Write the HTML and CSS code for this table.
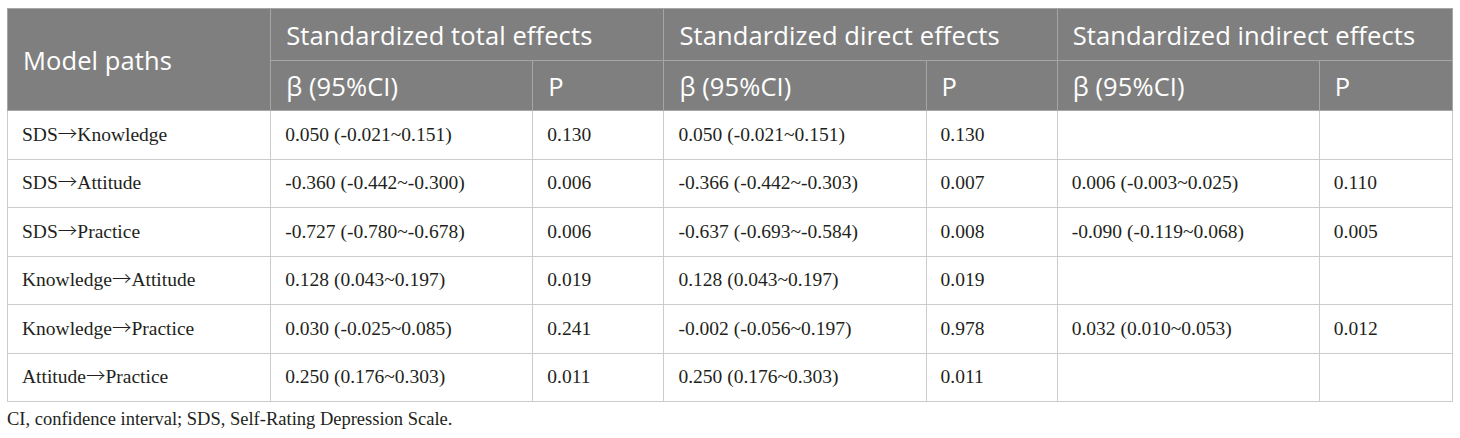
FILE: index.html
```html
<!DOCTYPE html>
<html lang="en">
<head>
<meta charset="utf-8">
<title>Table</title>
<link rel="stylesheet" href="styles.css">
</head>
<body>
<div class="wrap">
<table class="tbl">
<colgroup>
<col class="c-path"><col class="c-b"><col class="c-p"><col class="c-b"><col class="c-p"><col class="c-b"><col class="c-p2">
</colgroup>
<thead>
<tr class="h1">
<th rowspan="2">Model paths</th>
<th colspan="2">Standardized total effects</th>
<th colspan="2">Standardized direct effects</th>
<th colspan="2">Standardized indirect effects</th>
</tr>
<tr class="h2">
<th>β (95%CI)</th><th>P</th>
<th>β (95%CI)</th><th>P</th>
<th>β (95%CI)</th><th>P</th>
</tr>
</thead>
<tbody>
<tr><td>SDS<span class="arr">→</span>Knowledge</td><td>0.050 (-0.021~0.151)</td><td>0.130</td><td>0.050 (-0.021~0.151)</td><td>0.130</td><td></td><td></td></tr>
<tr><td>SDS<span class="arr">→</span>Attitude</td><td>-0.360 (-0.442~-0.300)</td><td>0.006</td><td>-0.366 (-0.442~-0.303)</td><td>0.007</td><td>0.006 (-0.003~0.025)</td><td>0.110</td></tr>
<tr><td>SDS<span class="arr">→</span>Practice</td><td>-0.727 (-0.780~-0.678)</td><td>0.006</td><td>-0.637 (-0.693~-0.584)</td><td>0.008</td><td>-0.090 (-0.119~0.068)</td><td>0.005</td></tr>
<tr><td>Knowledge<span class="arr">→</span>Attitude</td><td>0.128 (0.043~0.197)</td><td>0.019</td><td>0.128 (0.043~0.197)</td><td>0.019</td><td></td><td></td></tr>
<tr><td>Knowledge<span class="arr">→</span>Practice</td><td>0.030 (-0.025~0.085)</td><td>0.241</td><td>-0.002 (-0.056~0.197)</td><td>0.978</td><td>0.032 (0.010~0.053)</td><td>0.012</td></tr>
<tr><td>Attitude<span class="arr">→</span>Practice</td><td>0.250 (0.176~0.303)</td><td>0.011</td><td>0.250 (0.176~0.303)</td><td>0.011</td><td></td><td></td></tr>
</tbody>
</table>
<p class="note">CI, confidence interval; SDS, Self-Rating Depression Scale.</p>
</div>
</body>
</html>
```
FILE: styles.css
```css
html, body { margin: 0; padding: 0; background: #fff; }
.wrap { padding: 8px 8px 0 7px; }
.tbl {
  border-collapse: collapse;
  table-layout: fixed;
  width: 1446px;
}
.c-path { width: 263px; }
.c-b { width: 262px; }
.c-p { width: 131px; }
.c-p2 { width: 133px; }
.tbl th {
  background: #7f7f7f;
  color: #fff;
  font-family: "Open Sans", "Noto Sans", sans-serif;
  font-weight: 400;
  font-size: 25.5px;
  letter-spacing: 0.1px;
  text-align: left;
  padding: 0 0 0 15px;
  border: 1px solid #a6a6a6;
  white-space: nowrap;
}
.h1 th { height: 51px; }
.h2 th { height: 49px; }
.tbl td {
  font-family: "Liberation Serif", "Times New Roman", serif;
  font-size: 19.5px;
  line-height: 22px;
  color: #231f20;
  padding: 0 0 0 14px;
  height: 47.5px;
  border: 1px solid #cccccc;
  white-space: nowrap;
}
.arr {
  font-family: "Noto Sans CJK JP", "DejaVu Serif", serif;
  font-weight: 300;
  line-height: 0;
}
.note {
  margin: 7px 0 0 0;
  font-family: "Liberation Serif", "Times New Roman", serif;
  font-size: 18.5px;
  color: #231f20;
}
```
